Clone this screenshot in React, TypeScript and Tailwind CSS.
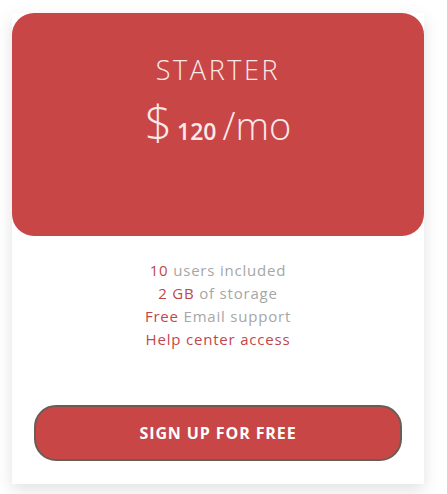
export default function App() {
  return (
    <div className="min-h-screen bg-white px-3 pt-[13px]" style={{ fontFamily: '"Open Sans", "DejaVu Sans", sans-serif' }}>
      <div className="w-[412px] bg-white shadow-[0_6px_16px_rgba(0,0,0,0.12)] pb-[23px]">
        <div className="h-[223px] rounded-[22px] bg-[#c84646] flex flex-col items-center pt-[40px] text-[#fbe9e9]">
          <h2 className="text-[27px] font-light tracking-[2.6px] leading-[34px]">STARTER</h2>
          <div className="flex items-baseline mt-[11px] leading-none">
            <span className="text-[48px] font-extralight">$</span>
            <span className="text-[23px] font-semibold ml-[5px]">120</span>
            <span className="text-[38px] font-light ml-[6px]">/mo</span>
          </div>
        </div>
        <ul className="flex flex-col items-center pt-[23px] text-[15px] leading-[23px] tracking-[0.8px] text-[#a6a6a6]">
          <li><span className="text-[#bf474b]">10</span> users included</li>
          <li><span className="text-[#bf474b]">2 GB</span> of storage</li>
          <li><span className="text-[#bf474b]">Free</span> Email support</li>
          <li className="text-[#bf474b]">Help center access</li>
        </ul>
        <div className="px-[22px] mt-[54px]">
          <button className="w-full h-[56px] rounded-[22px] border-2 border-[#6b5c58] bg-[#c84646] text-white text-[16px] font-bold tracking-[0.9px]">
            SIGN UP FOR FREE
          </button>
        </div>
      </div>
    </div>
  );
}
